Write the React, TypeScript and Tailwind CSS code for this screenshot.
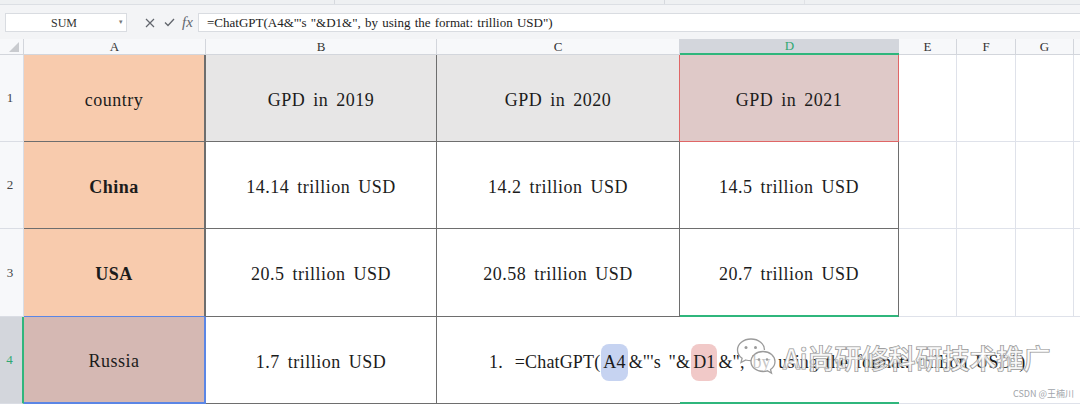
import React from "react";

const cellFont =
  "font-['Liberation_Serif','Times_New_Roman',serif] text-[18px] tracking-[0.5px] [word-spacing:3px] text-[#1c1c1c] pt-[4px]";
const hdrFont = "font-['Liberation_Serif',serif] text-[13px] text-[#333]";

function RowHead({ n, active }: { n: number; active?: boolean }) {
  return (
    <div
      className={
        active
          ? "w-[24px] shrink-0 flex items-center justify-center bg-[#d3d6dc] border-r-2 border-r-[#2fb67c] border-b border-b-[#dadde4] pr-[3px] font-['Liberation_Serif',serif] text-[13px] text-[#2fa872]"
          : "w-[24px] shrink-0 flex items-center justify-center bg-[#f7f8fa] border-r border-b border-[#dadde4] pr-[3px] font-['Liberation_Serif',serif] text-[13px] text-[#444]"
      }
    >
      {n}
    </div>
  );
}

function WeChatLogo() {
  return (
    <svg width="42" height="40" viewBox="0 0 42 40" fill="none">
      <path
        d="M16 2C8.3 2 2.5 7 2.5 13c0 3.4 1.8 6.3 4.6 8.3L6 25.5l4.8-2.5c1.6.5 3.3.7 5.2.7"
        stroke="#9b9b9b"
        strokeWidth="1.3"
        fill="rgba(255,255,255,0.75)"
      />
      <path d="M16 2c7.7 0 13.5 5 13.5 11" stroke="#9b9b9b" strokeWidth="1.3" />
      <circle cx="11" cy="10.5" r="1.5" fill="#9b9b9b" />
      <circle cx="20.5" cy="10.5" r="1.5" fill="#9b9b9b" />
      <path
        d="M28 14.5c-7 0-12 4.5-12 10s5 10 12 10c1.5 0 3-.2 4.3-.7l4.2 2.3-1-3.6c2.7-1.8 4.5-4.7 4.5-8 0-5.5-5-10-12-10z"
        stroke="#9b9b9b"
        strokeWidth="1.3"
        fill="rgba(255,255,255,0.75)"
      />
      <circle cx="24" cy="22.5" r="1.3" fill="#9b9b9b" />
      <circle cx="32" cy="22.5" r="1.3" fill="#9b9b9b" />
    </svg>
  );
}

export default function App() {
  return (
    <div className="relative w-[1080px] h-[406px] overflow-hidden bg-white">
      {/* top toolbar remnant */}
      <div className="h-[5px] bg-[#eef0f2] border-b border-[#dcdfe4] flex">
        <div className="w-[335px] border-r border-[#d6d9de]" />
        <div className="w-[330px] border-r border-[#d6d9de]" />
        <div className="w-[140px] border-r border-[#e0e2e6]" />
      </div>

      {/* formula bar */}
      <div className="h-[34px] bg-[#f3f4f6] flex items-start pt-[8px] pl-[5px]">
        <div className="relative w-[122px] h-[19px] bg-white border border-[#d9dce1] flex items-center justify-center">
          <span className="font-['Liberation_Serif',serif] text-[12px] text-[#333] pr-[4px]">
            SUM
          </span>
          <span className="absolute right-[3px] top-[3px] text-[7px] text-[#777]">▾</span>
        </div>
        <div className="w-[71px] h-[19px] flex items-center text-[#62666d]">
          <svg width="10" height="10" viewBox="0 0 10 10" className="ml-[18px]">
            <path d="M1 1L9 9M9 1L1 9" stroke="#62666d" strokeWidth="1.2" />
          </svg>
          <svg width="11" height="9" viewBox="0 0 11 9" className="ml-[9px]">
            <path d="M1 4.5L4 7.5L10 1" stroke="#62666d" strokeWidth="1.3" fill="none" />
          </svg>
          <span className="ml-[7px] font-['Liberation_Serif',serif] italic text-[15px] leading-none text-[#62666d]">
            fx
          </span>
        </div>
        <div className="flex-1 h-[19px] bg-white border border-r-0 border-[#d9dce1] flex items-center pl-[8px]">
          <span className="font-['Liberation_Serif',serif] text-[13px] tracking-[0px] [word-spacing:1px] text-[#222] whitespace-nowrap">
            =ChatGPT(A4&amp;"'s "&amp;D1&amp;", by using the format: trillion USD")
          </span>
        </div>
      </div>

      {/* column headers */}
      <div className="h-[16px] flex bg-[#f7f8fa]">
        <div className="w-[24px] shrink-0 border-r border-b border-[#d3d6dc] relative">
          <svg width="10" height="10" viewBox="0 0 10 10" className="absolute left-[9px] top-[3px]">
            <polygon points="10,0 10,10 0,10" fill="#c9cbcf" />
          </svg>
        </div>
        <div className={`w-[182px] shrink-0 border-r border-b border-[#d3d6dc] flex items-center justify-center ${hdrFont}`}>A</div>
        <div className={`w-[231px] shrink-0 border-r border-b border-[#d3d6dc] flex items-center justify-center ${hdrFont}`}>B</div>
        <div className={`w-[243px] shrink-0 border-r border-b border-[#d3d6dc] flex items-center justify-center ${hdrFont}`}>C</div>
        <div className="w-[219px] shrink-0 bg-[#d3d6dc] border-b-2 border-[#2fb67c] flex items-center justify-center font-['Liberation_Serif',serif] text-[13px] text-[#2fa872]">D</div>
        <div className={`w-[58px] shrink-0 border-r border-b border-[#d3d6dc] flex items-center justify-center ${hdrFont}`}>E</div>
        <div className={`w-[59px] shrink-0 border-r border-b border-[#d3d6dc] flex items-center justify-center ${hdrFont}`}>F</div>
        <div className={`w-[58px] shrink-0 border-r border-b border-[#d3d6dc] flex items-center justify-center ${hdrFont}`}>G</div>
        <div className="flex-1 border-b border-[#d3d6dc]" />
      </div>

      {/* row 1 */}
      <div className="h-[87px] flex">
        <RowHead n={1} />
        <div className={`w-[182px] shrink-0 bg-[#f8cbad] border-r-2 border-b border-[#6e6e6e] flex items-center justify-center ${cellFont}`}>country</div>
        <div className={`w-[231px] shrink-0 bg-[#e7e6e6] border-r border-b border-[#6e6e6e] flex items-center justify-center ${cellFont}`}>GPD in 2019</div>
        <div className={`w-[243px] shrink-0 bg-[#e7e6e6] border-r border-b border-[#6e6e6e] border-r-[#e06666] flex items-center justify-center ${cellFont}`}>GPD in 2020</div>
        <div className={`w-[219px] shrink-0 bg-[#dfc9c8] border-r border-b border-[#e06666] flex items-center justify-center ${cellFont}`}>GPD in 2021</div>
        <div className="w-[58px] shrink-0 border-r border-b border-[#dfe2ea]" />
        <div className="w-[59px] shrink-0 border-r border-b border-[#dfe2ea]" />
        <div className="w-[58px] shrink-0 border-r border-b border-[#dfe2ea]" />
        <div className="flex-1 border-b border-[#dfe2ea]" />
      </div>

      {/* row 2 */}
      <div className="h-[87px] flex">
        <RowHead n={2} />
        <div className={`w-[182px] shrink-0 bg-[#f8cbad] border-r-2 border-b border-[#6e6e6e] flex items-center justify-center font-bold ${cellFont}`}>China</div>
        <div className={`w-[231px] shrink-0 border-r border-b border-[#6e6e6e] flex items-center justify-center ${cellFont}`}>14.14 trillion USD</div>
        <div className={`w-[243px] shrink-0 border-r border-b border-[#6e6e6e] flex items-center justify-center ${cellFont}`}>14.2 trillion USD</div>
        <div className={`w-[219px] shrink-0 border-r border-b border-[#6e6e6e] flex items-center justify-center ${cellFont}`}>14.5 trillion USD</div>
        <div className="w-[58px] shrink-0 border-r border-b border-[#dfe2ea]" />
        <div className="w-[59px] shrink-0 border-r border-b border-[#dfe2ea]" />
        <div className="w-[58px] shrink-0 border-r border-b border-[#dfe2ea]" />
        <div className="flex-1 border-b border-[#dfe2ea]" />
      </div>

      {/* row 3 */}
      <div className="h-[88px] flex">
        <RowHead n={3} />
        <div className={`w-[182px] shrink-0 bg-[#f8cbad] border-r-2 border-r-[#6e6e6e] border-b border-b-[#5b86e5] flex items-center justify-center font-bold ${cellFont}`}>USA</div>
        <div className={`w-[231px] shrink-0 border-r border-b border-[#6e6e6e] flex items-center justify-center ${cellFont}`}>20.5 trillion USD</div>
        <div className={`w-[243px] shrink-0 border-r border-b border-[#6e6e6e] flex items-center justify-center ${cellFont}`}>20.58 trillion USD</div>
        <div className={`w-[219px] shrink-0 border-r border-r-[#6e6e6e] border-b-2 border-b-[#2fb67c] flex items-center justify-center ${cellFont}`}>20.7 trillion USD</div>
        <div className="w-[58px] shrink-0 border-r border-b border-[#dfe2ea]" />
        <div className="w-[59px] shrink-0 border-r border-b border-[#dfe2ea]" />
        <div className="w-[58px] shrink-0 border-r border-b border-[#dfe2ea]" />
        <div className="flex-1 border-b border-[#dfe2ea]" />
      </div>

      {/* row 4 */}
      <div className="h-[87px] flex">
        <RowHead n={4} active />
        <div className={`w-[182px] shrink-0 bg-[#d5b8b3] border-r-2 border-b-2 border-[#5b86e5] flex items-center justify-center ${cellFont}`}>Russia</div>
        <div className={`w-[231px] shrink-0 border-r border-b border-[#6e6e6e] flex items-center justify-center ${cellFont}`}>1.7 trillion USD</div>
        <div className="w-[243px] shrink-0 border-b border-[#6e6e6e] flex items-center pl-[52px] pt-[4px] whitespace-nowrap overflow-visible font-['Liberation_Serif','Times_New_Roman',serif] text-[18px] tracking-[0.15px] [word-spacing:3px] text-[#1c1c1c]">
          <span className="mr-[12px]">1.</span>
          <span>=ChatGPT(</span>
          <span className="rounded-[8px] bg-[#c6d3f1] px-[2px] py-[5px] mx-[1px]">A4</span>
          <span>&amp;"'s "&amp;</span>
          <span className="rounded-[8px] bg-[#f1c9c8] px-[2px] py-[5px] mx-[1px]">D1</span>
          <span>&amp;", by using the format: trillion USD")</span>
        </div>
        <div className="w-[219px] shrink-0 border-b-2 border-[#2fb67c]" />
        <div className="w-[58px] shrink-0 border-b border-[#dfe2ea]" />
        <div className="w-[59px] shrink-0 border-b border-[#dfe2ea]" />
        <div className="w-[58px] shrink-0 border-b border-[#dfe2ea]" />
        <div className="flex-1 border-b border-[#dfe2ea]" />
      </div>

      {/* watermark */}
      <div className="absolute left-[735px] top-[337px] h-[40px] flex items-center pointer-events-none">
        <WeChatLogo />
        <span className="ml-[6px] font-['Noto_Sans_CJK_SC','Noto_Sans',sans-serif] text-[27px] font-medium leading-none text-white/70 [-webkit-text-stroke:1.2px_#8f8f8f] [paint-order:stroke_fill]">
          Ai尚研修科研技术推广
        </span>
      </div>
      <div className="absolute left-[1013px] top-[389px] font-['Noto_Sans_CJK_SC','Noto_Sans',sans-serif] text-[9px] leading-none text-[#a0a4aa]">
        CSDN @王楠川
      </div>
    </div>
  );
}
